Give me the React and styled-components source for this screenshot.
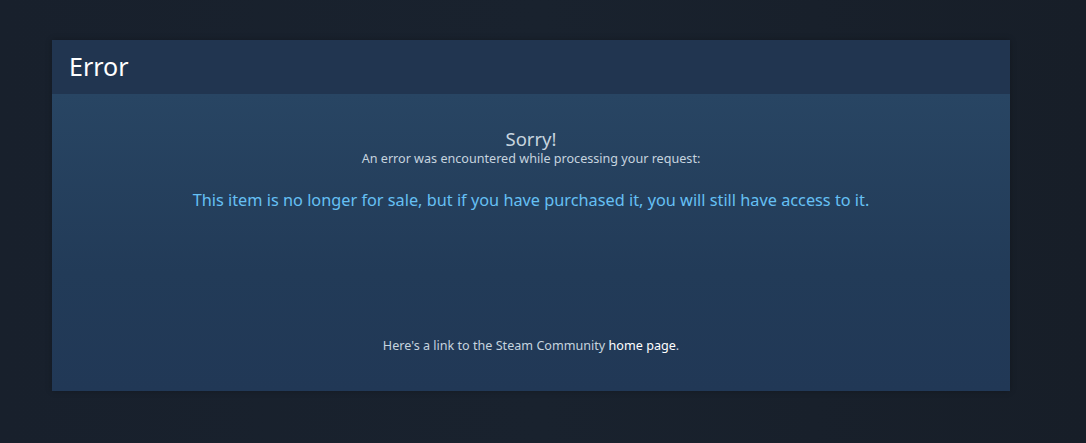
import React from 'react'
import styled, { createGlobalStyle } from 'styled-components'

const GlobalStyle = createGlobalStyle`
  html, body {
    margin: 0;
    padding: 0;
    background: #18202b;
    font-family: "Noto Sans", "Liberation Sans", Arial, sans-serif;
  }
`

const Page = styled.div`
  min-height: 443px;
  padding: 40px 0 0 52px;
  box-sizing: border-box;
  background: linear-gradient(to right, #18202c 0%, #19222e 50%, #171e28 100%);
`

const Panel = styled.div`
  width: 958px;
  box-shadow: 0 0 6px rgba(0, 0, 0, 0.25);
`

const PanelHeader = styled.div`
  height: 54px;
  background: #213550;
  display: flex;
  align-items: center;
  padding-left: 17px;
`

const Title = styled.h2`
  margin: 0 0 2px;
  font-size: 25px;
  font-weight: 400;
  color: #ffffff;
  line-height: 1;
`

const PanelBody = styled.div`
  height: 297px;
  background: linear-gradient(to bottom, #284563 0%, #223b58 60%, #213856 100%);
  display: flex;
  flex-direction: column;
  align-items: center;
  text-align: center;
  padding-top: 32px;
  box-sizing: border-box;
`

const Sorry = styled.div`
  font-size: 18.5px;
  color: #c6d4df;
  line-height: 26px;
`

const Subtitle = styled.div`
  font-size: 12.6px;
  color: #c6d4df;
  line-height: 18px;
  margin-top: -2px;
`

const Message = styled.div`
  margin-top: 22px;
  font-size: 16.3px;
  color: #66c0f4;
  line-height: 20px;
`

const Footer = styled.div`
  margin-top: auto;
  margin-bottom: 37px;
  font-size: 12.6px;
  color: #c6d4df;
`

const Link = styled.a`
  color: #ffffff;
  text-decoration: none;
  cursor: pointer;
`

export default function App() {
  return (
    <>
      <GlobalStyle />
      <Page>
        <Panel>
          <PanelHeader>
            <Title>Error</Title>
          </PanelHeader>
          <PanelBody>
            <Sorry>Sorry!</Sorry>
            <Subtitle>An error was encountered while processing your request:</Subtitle>
            <Message>
              This item is no longer for sale, but if you have purchased it, you will still have access to it.
            </Message>
            <Footer>
              Here's a link to the Steam Community <Link>home page</Link>.
            </Footer>
          </PanelBody>
        </Panel>
      </Page>
    </>
  )
}
